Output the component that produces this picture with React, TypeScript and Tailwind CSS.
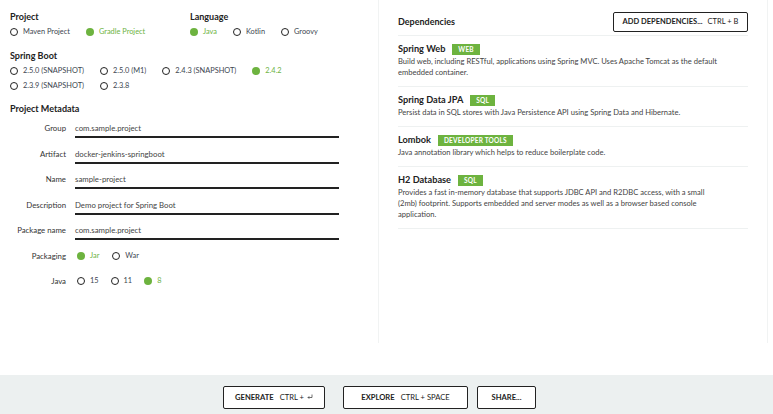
import React from 'react';

type Opt = { label: string; checked?: boolean };

const Radio: React.FC<Opt> = ({ label, checked }) => (
  <div className="flex items-center gap-[5px]">
    {checked ? (
      <span className="w-[8px] h-[8px] rounded-full bg-[#6db33f]" />
    ) : (
      <span className="w-[8px] h-[8px] rounded-full border-[1.5px] border-[#222]" />
    )}
    <span className={checked ? 'text-[#6db33f]' : 'text-[#3d4650]'}>{label}</span>
  </div>
);

const RadioRow: React.FC<{ options: Opt[]; className?: string }> = ({ options, className = '' }) => (
  <div className={`flex items-center gap-4 h-[12px] text-[7.4px] leading-[12px] ${className}`}>
    {options.map((o) => (
      <Radio key={o.label} {...o} />
    ))}
  </div>
);

const Heading: React.FC<{ children: React.ReactNode; className?: string }> = ({ children, className = '' }) => (
  <div className={`h-[12px] text-[9px] leading-[12px] font-bold text-[#222] ${className}`}>{children}</div>
);

const fields = [
  { label: 'Group', value: 'com.sample.project' },
  { label: 'Artifact', value: 'docker-jenkins-springboot' },
  { label: 'Name', value: 'sample-project' },
  { label: 'Description', value: 'Demo project for Spring Boot' },
  { label: 'Package name', value: 'com.sample.project' },
];

const deps = [
  {
    name: 'Spring Web',
    tag: 'WEB',
    desc: 'Build web, including RESTful, applications using Spring MVC. Uses Apache Tomcat as the default embedded container.',
  },
  {
    name: 'Spring Data JPA',
    tag: 'SQL',
    desc: 'Persist data in SQL stores with Java Persistence API using Spring Data and Hibernate.',
  },
  {
    name: 'Lombok',
    tag: 'DEVELOPER TOOLS',
    desc: 'Java annotation library which helps to reduce boilerplate code.',
  },
  {
    name: 'H2 Database',
    tag: 'SQL',
    desc: 'Provides a fast in-memory database that supports JDBC API and R2DBC access, with a small (2mb) footprint. Supports embedded and server modes as well as a browser based console application.',
  },
];

const FooterButton: React.FC<{ label: string; hint?: React.ReactNode; className?: string }> = ({ label, hint, className = '' }) => (
  <button
    className={`h-[23px] border-[1.5px] border-[#222] rounded-[2px] bg-white flex items-center justify-center gap-[6px] text-[7.6px] text-[#222] ${className}`}
  >
    <span className="font-bold">{label}</span>
    {hint && <span>{hint}</span>}
  </button>
);

export default function App() {
  return (
    <div className="w-[773px] h-[414px] flex flex-col bg-white text-[#222] font-['Lato','Liberation_Sans',sans-serif] overflow-hidden">
      {/* Main */}
      <div className="flex h-[375px]">
        {/* Left column */}
        <div className="w-[379px] h-[343px] border-r border-[#f1f3f3] pl-[10px] pt-[11px]">
          <div className="flex">
            <div className="w-[180px]">
              <Heading>Project</Heading>
              <RadioRow
                className="mt-[3px]"
                options={[{ label: 'Maven Project' }, { label: 'Gradle Project', checked: true }]}
              />
            </div>
            <div>
              <Heading>Language</Heading>
              <RadioRow
                className="mt-[3px]"
                options={[{ label: 'Java', checked: true }, { label: 'Kotlin' }, { label: 'Groovy' }]}
              />
            </div>
          </div>

          <Heading className="mt-[12px]">Spring Boot</Heading>
          <RadioRow
            className="mt-[3px]"
            options={[
              { label: '2.5.0 (SNAPSHOT)' },
              { label: '2.5.0 (M1)' },
              { label: '2.4.3 (SNAPSHOT)' },
              { label: '2.4.2', checked: true },
            ]}
          />
          <RadioRow className="mt-[3px]" options={[{ label: '2.3.9 (SNAPSHOT)' }, { label: '2.3.8' }]} />

          <Heading className="mt-[11px]">Project Metadata</Heading>
          <div className="mt-[7px]">
            {fields.map((f) => (
              <div key={f.label} className="flex h-[25.5px] text-[7.8px] leading-[12px]">
                <div className="w-[56px] text-right text-[#333]">{f.label}</div>
                <div className="ml-[9px] w-[264px] h-[16px] border-b-2 border-[#222] text-[#444]">{f.value}</div>
              </div>
            ))}
            <div className="flex h-[25.5px] text-[7.8px] leading-[12px]">
              <div className="w-[56px] text-right text-[#333]">Packaging</div>
              <RadioRow className="ml-[11px] gap-[13px]" options={[{ label: 'Jar', checked: true }, { label: 'War' }]} />
            </div>
            <div className="flex h-[25.5px] text-[7.8px] leading-[12px]">
              <div className="w-[56px] text-right text-[#333]">Java</div>
              <RadioRow
                className="ml-[11px] gap-[12px]"
                options={[{ label: '15' }, { label: '11' }, { label: '8', checked: true }]}
              />
            </div>
          </div>
        </div>

        {/* Right column */}
        <div className="w-[389px] h-[343px] border-r border-[#f1f3f3] px-[19px]">
          <div className="flex items-center justify-between pt-[12px] pb-[3px] border-b border-[#eef1f1]">
            <div className="text-[9px] font-bold text-[#222]">Dependencies</div>
            <button className="w-[135px] h-[20px] border-[1.5px] border-[#222] rounded-[2px] flex items-center justify-center gap-[5px] text-[7.5px] text-[#222]">
              <span className="font-bold">ADD DEPENDENCIES...</span>
              <span>CTRL + B</span>
            </button>
          </div>
          {deps.map((d) => (
            <div key={d.name} className="pt-[7px] pb-[8px] border-b border-[#eef1f1]">
              <div className="flex items-center gap-[7px] h-[12px]">
                <span className="text-[9.2px] font-bold text-[#222]">{d.name}</span>
                <span className="h-[11px] px-[6px] bg-[#6db33f] text-white text-[6.5px] font-bold leading-[11px] tracking-[0.2px]">
                  {d.tag}
                </span>
              </div>
              <p className="mt-[1px] max-w-[322px] text-[7.6px] leading-[11px] text-[#444]">{d.desc}</p>
            </div>
          ))}
        </div>
      </div>

      {/* Footer */}
      <div className="flex-1 bg-[#ecf0f0] flex items-start pt-[11px] pl-[223px]">
        <FooterButton
          className="w-[102px]"
          label="GENERATE"
          hint={
            <span className="inline-flex items-center gap-[3px]">
              CTRL +
              <svg width="6" height="6" viewBox="0 0 12 12" fill="none" stroke="#222" strokeWidth="1.3">
                <path d="M10 1v6H2" />
                <path d="M4.5 4.5 2 7l2.5 2.5" />
              </svg>
            </span>
          }
        />
        <FooterButton className="ml-[18px] w-[125px]" label="EXPLORE" hint="CTRL + SPACE" />
        <FooterButton className="ml-[9px] w-[59px]" label="SHARE..." />
      </div>
    </div>
  );
}
